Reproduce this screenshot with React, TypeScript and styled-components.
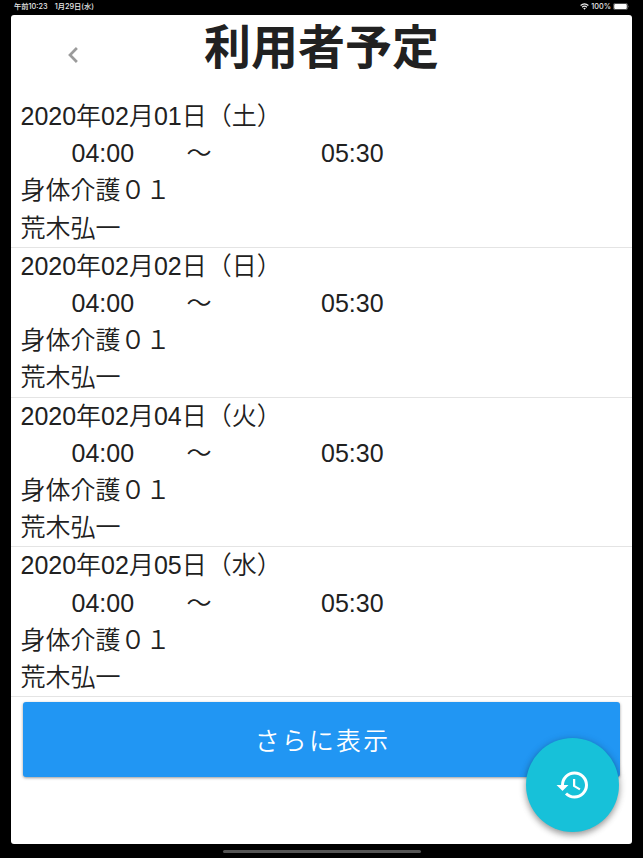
import React from "react";
import styled, { createGlobalStyle } from "styled-components";

const GlobalStyle = createGlobalStyle`
  * { box-sizing: border-box; }
  html, body { margin: 0; background: #000; }
  body {
    font-family: "Liberation Sans", "Noto Sans CJK JP", sans-serif;
    color: #212121;
  }
`;

const Device = styled.div`
  position: relative;
  display: flex;
  flex-direction: column;
  width: 643px;
  height: 858px;
  padding: 0 11px;
  background: #000;
`;

const StatusBar = styled.header`
  display: flex;
  justify-content: space-between;
  align-items: center;
  flex: none;
  height: 15px;
  padding: 0 3px 2px 3px;
  color: #e8e8e8;
  font-family: Inter, "Noto Sans CJK JP", sans-serif;
  font-size: 7.3px;
  font-weight: 500;
  line-height: 12px;
  white-space: nowrap;
`;

const StatusGroup = styled.div<{ $gap: number }>`
  display: flex;
  align-items: center;
  gap: ${(p) => p.$gap}px;
`;

const Screen = styled.main`
  display: flex;
  flex-direction: column;
  flex: none;
  height: 829px;
  background: #fff;
  border-radius: 3px;
`;

const TitleBar = styled.div`
  display: grid;
  grid-template-columns: 124px 1fr 124px;
  height: 83px;
  flex: none;
`;

const BackButton = styled.button`
  display: flex;
  align-items: center;
  justify-content: center;
  height: 80px;
  padding: 0;
  border: 0;
  background: none;
`;

const Title = styled.h1`
  margin: 0;
  font-family: "Noto Sans CJK JP", sans-serif;
  font-size: 47px;
  font-weight: 700;
  line-height: 58px;
  text-align: center;
  white-space: nowrap;
`;

const List = styled.ul`
  margin: 0;
  padding: 0;
  list-style: none;
`;

const Visit = styled.li`
  height: 149.8px;
  padding: 0 0 0 9.5px;
  border-bottom: 1px solid #e4e4e4;
  font-size: 25px;
  font-weight: 350;
  line-height: 37.3px;
  white-space: nowrap;
`;

const Line = styled.div`
  height: 37.2px;
`;

const TimeLine = styled(Line)`
  display: grid;
  grid-template-columns: 115px 134.5px 1fr;
  padding-left: 51px;
`;

const MoreButton = styled.button`
  flex: none;
  height: 75px;
  margin: 5px 12px 0;
  padding: 0 0 2px 2px;
  border: 0;
  border-radius: 3px;
  background: #2196f3;
  box-shadow: 0 1px 3px rgba(0, 0, 0, 0.4);
  color: #fff;
  font-family: "Noto Sans CJK JP", sans-serif;
  font-size: 24.8px;
  font-weight: 350;
  letter-spacing: 2.3px;
`;

const HistoryButton = styled.button`
  position: absolute;
  left: 526px;
  top: 738px;
  display: flex;
  align-items: center;
  justify-content: center;
  width: 93px;
  height: 94px;
  padding: 0;
  border: 0;
  border-radius: 50%;
  background: #17c1d9;
  box-shadow: 0 3px 6px rgba(0, 0, 0, 0.34), 0 1px 10px rgba(0, 0, 0, 0.12);
`;

const HomeIndicator = styled.div`
  width: 198px;
  height: 3px;
  margin: 6px auto 0;
  border-radius: 2px;
  background: #555;
`;

const visits = [
  "2020年02月01日（土）",
  "2020年02月02日（日）",
  "2020年02月04日（火）",
  "2020年02月05日（水）",
];

const WifiIcon = () => (
  <svg width="9" height="7" viewBox="0 0 9 7" fill="none" stroke="#eee" strokeWidth="1.2">
    <path d="M.6 2.5Q4.5-.9 8.4 2.5M2.1 4.2Q4.5 2.1 6.9 4.2" />
    <path d="M3.2 5.2Q4.5 4.4 5.8 5.2L4.5 6.7Z" fill="#eee" stroke="none" />
  </svg>
);

const BatteryIcon = () => (
  <svg width="16" height="7" viewBox="0 0 16 7">
    <rect x=".4" y=".4" width="14.2" height="6.2" rx="1.6" fill="none" stroke="#777" strokeWidth=".7" />
    <rect x="1.2" y="1.1" width="12.6" height="4.8" rx="1" fill="#fff" />
    <path d="M15.2 2.5q1 1 0 2z" fill="#888" />
  </svg>
);

export default function App() {
  return (
    <>
      <GlobalStyle />
      <Device>
        <StatusBar>
          <StatusGroup $gap={7}>
            <span>午前10:23</span>
            <span>1月29日(水)</span>
          </StatusGroup>
          <StatusGroup $gap={2}>
            <WifiIcon />
            <span>100%</span>
            <BatteryIcon />
          </StatusGroup>
        </StatusBar>
        <Screen>
          <TitleBar>
            <BackButton aria-label="戻る">
              <svg width="10" height="16" viewBox="0 0 10 16" fill="none" stroke="#9b9b9b" strokeWidth="2.7">
                <path d="M8.9 1 2 8l6.9 7" />
              </svg>
            </BackButton>
            <Title>利用者予定</Title>
          </TitleBar>
          <List>
            {visits.map((date) => (
              <Visit key={date}>
                <Line>{date}</Line>
                <TimeLine>
                  <span>04:00</span>
                  <span>～</span>
                  <span>05:30</span>
                </TimeLine>
                <Line>身体介護０１</Line>
                <Line>荒木弘一</Line>
              </Visit>
            ))}
          </List>
          <MoreButton>さらに表示</MoreButton>
        </Screen>
        <HomeIndicator />
        <HistoryButton aria-label="履歴">
          <svg width="36" height="36" viewBox="0 0 24 24" fill="#fff">
            <path d="M13 3a9 9 0 0 0-9 9H1l3.89 3.89.07.14L9 12H6c0-3.87 3.13-7 7-7s7 3.13 7 7-3.13 7-7 7c-1.93 0-3.68-.79-4.94-2.06l-1.42 1.42A8.95 8.95 0 0 0 13 21a9 9 0 0 0 0-18zm-1 5v5l4.28 2.54.72-1.21-3.5-2.08V8H12z" />
          </svg>
        </HistoryButton>
      </Device>
    </>
  );
}
